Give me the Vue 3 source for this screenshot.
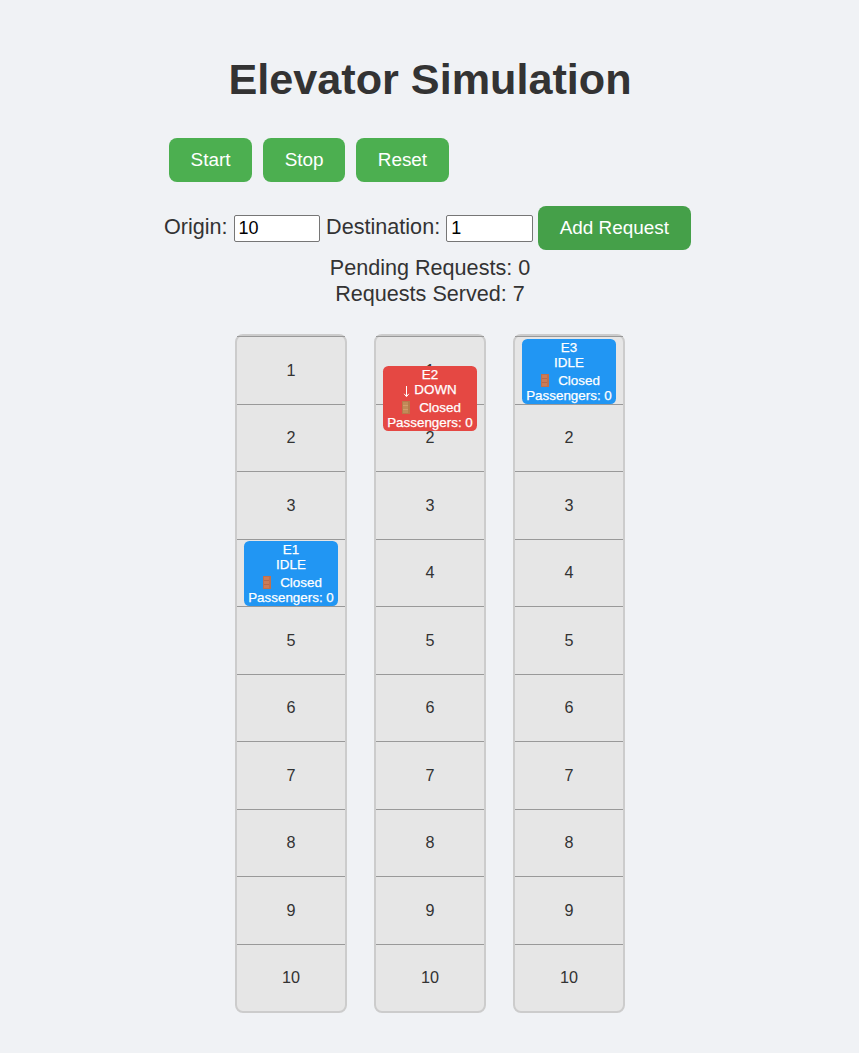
<script setup>
import { ref } from 'vue'

const origin = ref(10)
const destination = ref(1)
const floors = 10
const floorHeight = 67.5
const elevators = [
  { id: 1, status: 'IDLE', offset: 3 * floorHeight },
  { id: 2, status: 'DOWN', offset: 27 },
  { id: 3, status: 'IDLE', offset: 0 },
]
</script>

<template>
  <main class="page">
    <h1>Elevator Simulation</h1>
    <section class="controls">
      <div class="actions">
        <button>Start</button>
        <button>Stop</button>
        <button>Reset</button>
      </div>
      <div class="request">
        <label>Origin:</label>
        <input v-model="origin" type="text" />
        <label>Destination:</label>
        <input v-model="destination" type="text" />
        <button class="add">Add Request</button>
      </div>
    </section>
    <div class="stats">
      <div>Pending Requests: 0</div>
      <div>Requests Served: 7</div>
    </div>
    <section class="building">
      <div v-for="e in elevators" :key="e.id" class="shaft">
        <div v-for="n in floors" :key="n" class="floor">{{ n }}</div>
        <div class="car" :class="{ moving: e.status !== 'IDLE' }" :style="{ top: e.offset + 2.7 + 'px' }">
          <div class="line">E{{ e.id }}</div>
          <div class="line"><span v-if="e.status === 'DOWN'" class="arrow"><svg viewBox="0 0 7 13"><path d="M3.5 1v10M1.2 8.8l2.3 2.9 2.3-2.9" /></svg></span>{{ e.status }}</div>
          <div class="line door-line">
            <svg class="door" viewBox="0 0 8 13">
              <rect class="frame" width="8" height="13" />
              <rect class="panel" x="1" y="1" width="5" height="11" />
              <path class="slats" d="M1 4.5h5M1 8.5h5" />
            </svg>
            <span>Closed</span>
          </div>
          <div class="line">Passengers: 0</div>
        </div>
      </div>
    </section>
  </main>
</template>

<style>
html,
body {
  background: #f0f2f5;
}
body {
  margin: 0;
}
</style>

<style scoped>
.page {
  box-sizing: border-box;
  height: 1053px;
  padding-top: 54px;
  padding-left: 1px;
  display: flex;
  flex-direction: column;
  align-items: center;
  color: #333;
  font-family: "Liberation Sans", Arial, sans-serif;
  font-size: 21.6px;
}
h1 {
  margin: 0;
  font-size: 43.2px;
  line-height: 50px;
}
.controls {
  width: 532px;
  margin-top: 34px;
}
.actions {
  display: flex;
  gap: 11px;
  padding-left: 5px;
}
button {
  height: 44px;
  padding: 0 21.6px;
  border: 0;
  border-radius: 8px;
  background: #4caf50;
  color: #fff;
  font: 18.9px/44px "Liberation Sans", Arial, sans-serif;
}
.request {
  display: flex;
  align-items: center;
  margin-top: 24px;
  height: 44px;
  white-space: nowrap;
}
.request label {
  margin-top: -3px;
}
input {
  box-sizing: border-box;
  width: 86.5px;
  height: 27px;
  margin: 0 6px;
  padding: 0 4px;
  border: 1px solid #767676;
  border-radius: 2px;
  background: #fff;
  color: #000;
  font: 18px "Liberation Sans", Arial, sans-serif;
}
.add {
  margin-left: -1px;
  padding: 0 22px;
  background: #45a049;
}
.stats {
  margin-top: 5px;
  line-height: 26px;
  text-align: center;
}
.building {
  display: flex;
  gap: 27px;
  margin-top: 27px;
}
.shaft {
  position: relative;
  box-sizing: border-box;
  width: 112px;
  height: 679px;
  border: 2px solid #ccc;
  border-radius: 8px;
  background: #e6e6e6;
}
.floor {
  box-sizing: border-box;
  height: 67.5px;
  border-top: 1px solid #999;
  font-size: 16.2px;
  line-height: 66px;
  text-align: center;
}
.floor:nth-child(even) {
  line-height: 64px;
}
.car {
  position: absolute;
  left: 7px;
  box-sizing: border-box;
  width: 94px;
  height: 65px;
  padding-top: 1px;
  border-radius: 5.4px;
  background: #2196f3;
  color: #fff;
  font-size: 13.4px;
  -webkit-text-stroke: 0.25px #fff;
  line-height: 15px;
  text-align: center;
  white-space: nowrap;
}
.moving {
  background: #e54843;
}
.door-line {
  display: flex;
  align-items: center;
  justify-content: center;
  gap: 9px;
  padding: 3px 0 0 5px;
}
.door {
  width: 8px;
  height: 13px;
  margin-left: -2px;
}
.frame {
  fill: #c0704e;
}
.panel {
  fill: #cb7c57;
}
.slats {
  stroke: #b8694a;
}
.moving .frame {
  fill: #b77a4b;
}
.moving .panel {
  fill: #c18b59;
}
.moving .slats {
  stroke: #d29c6b;
}
.arrow svg {
  width: 7px;
  height: 13px;
  margin: -2px 4px -2px 0;
  vertical-align: -2px;
  fill: none;
  stroke: #fff;
}
</style>
